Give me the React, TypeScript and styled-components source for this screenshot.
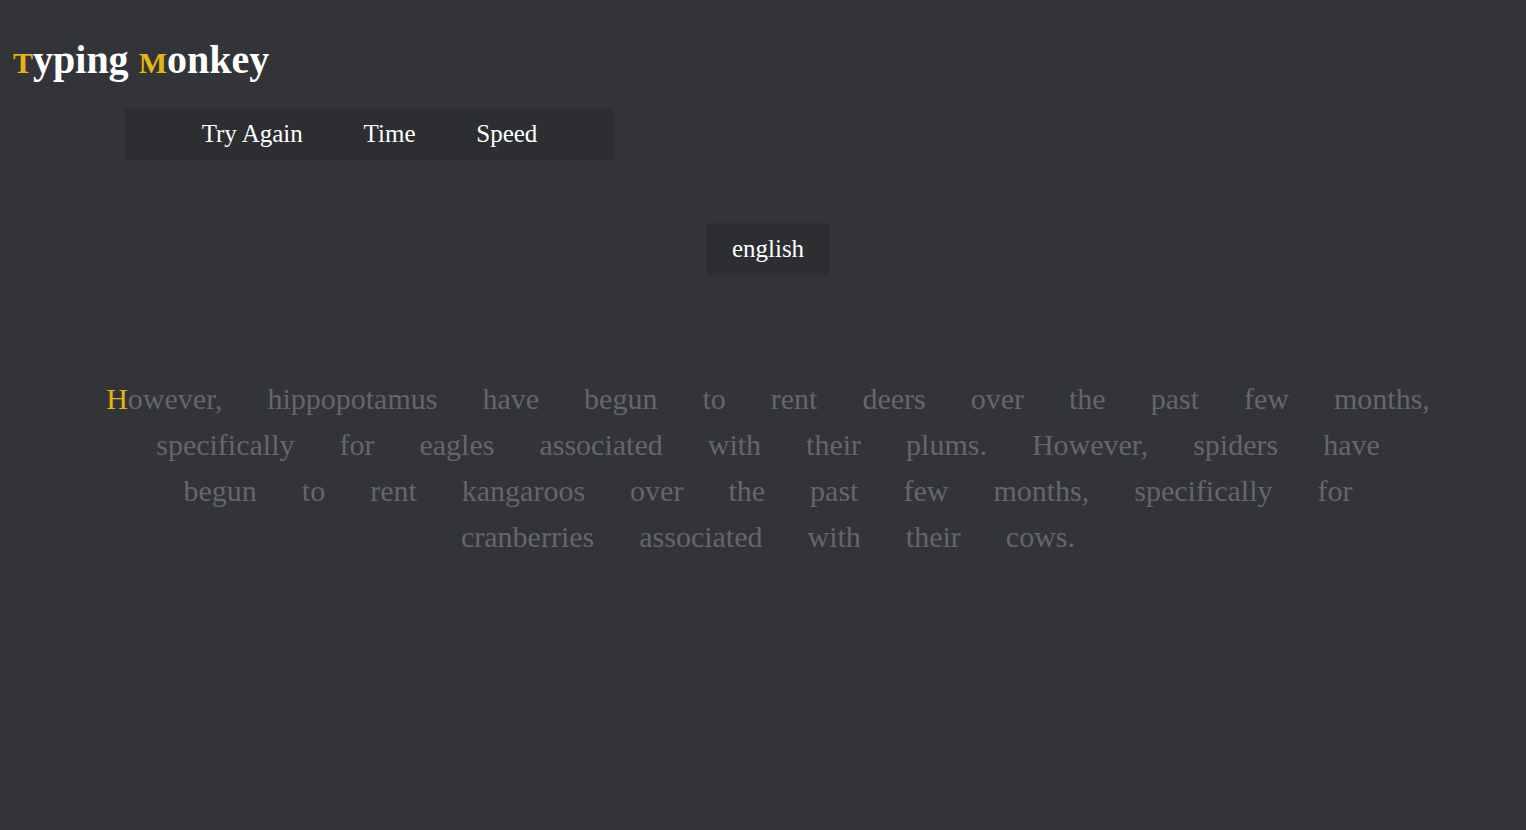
import React from "react";
import styled, { createGlobalStyle } from "styled-components";

const Global = createGlobalStyle`
  html, body {
    margin: 0;
    padding: 0;
    background: #323437;
    font-family: "Liberation Serif", "Times New Roman", serif;
  }
  #root { min-height: 830px; }
`;

const Page = styled.div`
  display: flex;
  flex-direction: column;
  min-height: 830px;
`;

const Title = styled.h1`
  margin: 0;
  padding: 37px 0 0 13px;
  font-size: 40px;
  line-height: 46px;
  height: 46px;
  font-weight: 700;
  color: #ffffff;
`;

const Accent = styled.span`
  font-size: 30px;
  line-height: 1;
  color: #e2b714;
`;

const Toolbar = styled.nav`
  margin: 25px 0 0 125px;
  width: 489px;
  height: 52px;
  display: flex;
  align-items: center;
  justify-content: center;
  background: #2c2e31;
`;

const ToolButton = styled.button`
  background: none;
  border: none;
  padding: 0 30.4px;
  font-family: "Liberation Serif", "Times New Roman", serif;
  font-size: 25px;
  line-height: 30px;
  color: #ffffff;
  cursor: pointer;
`;

const LangRow = styled.div`
  margin-top: 63px;
  padding-left: 10px;
  display: flex;
  justify-content: center;
`;

const LangButton = styled.button`
  width: 122px;
  height: 52px;
  padding: 0;
  border: none;
  border-radius: 4px;
  background: #2c2e31;
  font-family: "Liberation Serif", "Times New Roman", serif;
  font-size: 25px;
  color: #ffffff;
  cursor: pointer;
`;

const Words = styled.div`
  margin: 101px 0 0 100px;
  width: 1336px;
  display: flex;
  flex-wrap: wrap;
  justify-content: center;
  column-gap: 45px;
  font-size: 30px;
  line-height: 46px;
  color: #646669;
`;

const Word = styled.span`
  white-space: nowrap;
`;

const Current = styled.span`
  color: #e2b714;
`;

const text =
  "However, hippopotamus have begun to rent deers over the past few months, specifically for eagles associated with their plums. However, spiders have begun to rent kangaroos over the past few months, specifically for cranberries associated with their cows.";

export default function App() {
  const words = text.split(" ");
  return (
    <>
      <Global />
      <Page>
        <Title>
          <Accent>T</Accent>yping <Accent>M</Accent>onkey
        </Title>
        <Toolbar>
          <ToolButton>Try Again</ToolButton>
          <ToolButton>Time</ToolButton>
          <ToolButton>Speed</ToolButton>
        </Toolbar>
        <LangRow>
          <LangButton>english</LangButton>
        </LangRow>
        <Words>
          {words.map((w, i) =>
            i === 0 ? (
              <Word key={i}>
                <Current>{w[0]}</Current>
                {w.slice(1)}
              </Word>
            ) : (
              <Word key={i}>{w}</Word>
            )
          )}
        </Words>
      </Page>
    </>
  );
}
